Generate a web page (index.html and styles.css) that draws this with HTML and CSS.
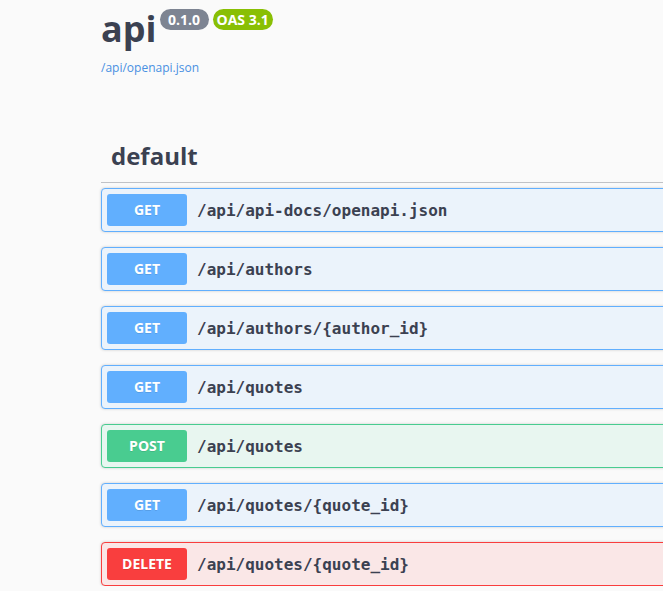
FILE: index.html
```html
<!DOCTYPE html>
<html>
<head>
<meta charset="utf-8">
<link rel="stylesheet" href="styles.css">
</head>
<body>
<div class="wrapper">
  <div class="info">
    <div class="title-row">
      <h2 class="title">api</h2>
      <span class="badge badge-version">0.1.0</span>
      <span class="badge badge-oas">OAS 3.1</span>
    </div>
    <a class="spec-link" href="#">/api/openapi.json</a>
  </div>

  <div class="tag-section">
    <h3 class="tag">default</h3>
    <div class="ops">
      <div class="opblock get"><span class="method">GET</span><span class="path">/api/api-docs/openapi.json</span></div>
      <div class="opblock get"><span class="method">GET</span><span class="path">/api/authors</span></div>
      <div class="opblock get"><span class="method">GET</span><span class="path">/api/authors/{author_id}</span></div>
      <div class="opblock get"><span class="method">GET</span><span class="path">/api/quotes</span></div>
      <div class="opblock post"><span class="method">POST</span><span class="path">/api/quotes</span></div>
      <div class="opblock get"><span class="method">GET</span><span class="path">/api/quotes/{quote_id}</span></div>
      <div class="opblock delete"><span class="method">DELETE</span><span class="path">/api/quotes/{quote_id}</span></div>
    </div>
  </div>
</div>
</body>
</html>
```

FILE: styles.css
```css
html, body {
  margin: 0;
  padding: 0;
  background: #fafafa;
  overflow: hidden;
}

body {
  font-family: "Open Sans", "Noto Sans", sans-serif;
  color: #3b4151;
}

.wrapper {
  padding-left: 101px;
  width: 1000px;
}

.info {
  padding-top: 4px;
}

.title-row {
  display: flex;
  align-items: flex-start;
  gap: 4px;
}

.title {
  margin: 0;
  font-size: 36px;
  font-weight: 700;
  color: #3b4151;
  line-height: 49px;
}

.badge {
  margin-top: 5px;
  display: inline-block;
  height: 21px;
  line-height: 21px;
  border-radius: 11px;
  color: #fff;
  font-size: 14px;
  font-weight: 700;
}

.badge-version {
  background: #7d8492;
  padding: 0 8.5px;
  margin-left: -1px;
}

.badge-oas {
  background: #89bf04;
  padding: 0 4px;
}

.spec-link {
  display: block;
  margin-top: 6px;
  color: #4990e2;
  font-size: 12px;
  text-decoration: none;
  line-height: 17px;
}

.tag-section {
  margin-top: 53px;
}

.tag {
  margin: 0 0 5px;
  padding: 10px 20px 10px 10px;
  font-size: 24px;
  font-weight: 700;
  line-height: 33px;
  border-bottom: 1px solid rgba(59, 65, 81, 0.3);
}

.ops {
  display: flex;
  flex-direction: column;
  gap: 15px;
}

.opblock {
  display: flex;
  align-items: center;
  padding: 5px;
  border: 1px solid;
  border-radius: 4px;
  box-shadow: 0 0 3px rgba(0, 0, 0, 0.19);
}

.method {
  width: 80px;
  height: 32px;
  line-height: 32px;
  text-align: center;
  border-radius: 3px;
  color: #fff;
  font-size: 14px;
  font-weight: 700;
  text-shadow: 0 1px 0 rgba(0, 0, 0, 0.1);
}

.path {
  padding: 0 10px;
  font-family: "DejaVu Sans Mono", monospace;
  font-size: 16px;
  font-weight: 700;
  color: #3b4151;
}

.get {
  border-color: #61affe;
  background: #ebf3fb;
}
.get .method { background: #61affe; }

.post {
  border-color: #49cc90;
  background: #e8f6f0;
}
.post .method { background: #49cc90; }

.delete {
  border-color: #f93e3e;
  background: #fae7e7;
}
.delete .method { background: #f93e3e; }
```
